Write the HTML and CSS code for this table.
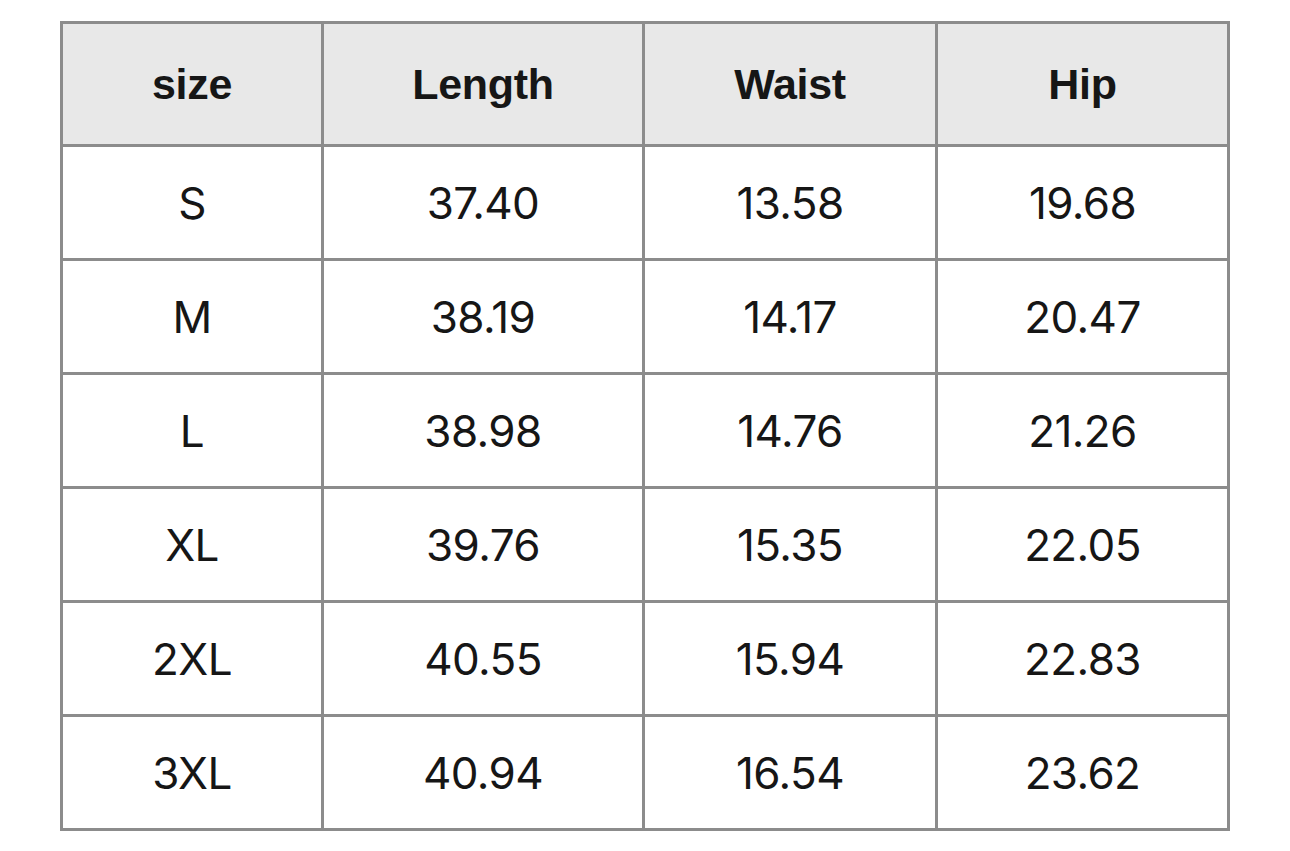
FILE: index.html
```html
<!DOCTYPE html>
<html>
<head>
<meta charset="utf-8">
<link rel="stylesheet" href="styles.css">
</head>
<body>
<div class="chart">
  <div class="cell head">size</div>
  <div class="cell head">Length</div>
  <div class="cell head">Waist</div>
  <div class="cell head">Hip</div>

  <div class="cell">S</div>
  <div class="cell">37.40</div>
  <div class="cell">13.58</div>
  <div class="cell">19.68</div>

  <div class="cell">M</div>
  <div class="cell">38.19</div>
  <div class="cell">14.17</div>
  <div class="cell">20.47</div>

  <div class="cell">L</div>
  <div class="cell">38.98</div>
  <div class="cell">14.76</div>
  <div class="cell">21.26</div>

  <div class="cell">XL</div>
  <div class="cell">39.76</div>
  <div class="cell">15.35</div>
  <div class="cell">22.05</div>

  <div class="cell">2XL</div>
  <div class="cell">40.55</div>
  <div class="cell">15.94</div>
  <div class="cell">22.83</div>

  <div class="cell">3XL</div>
  <div class="cell">40.94</div>
  <div class="cell">16.54</div>
  <div class="cell">23.62</div>
</div>
</body>
</html>
```
FILE: styles.css
```css
html, body {
  margin: 0;
  padding: 0;
  background: #ffffff;
}
body {
  padding: 21px 0 0 60px;
  font-family: Inter, "Liberation Sans", Arial, sans-serif;
  color: #161616;
}
.chart {
  display: inline-grid;
  grid-template-columns: 258px 318px 290px 289px;
  grid-template-rows: 120px repeat(6, 111px);
  gap: 3px;
  padding: 3px;
  background: #8c8c8c;
}
.cell {
  background: #ffffff;
  display: flex;
  align-items: center;
  justify-content: center;
  font-size: 44px;
  font-weight: 400;
  letter-spacing: -0.6px;
}
.cell.head {
  background: #e8e8e8;
  font-family: "Liberation Sans", Arial, sans-serif;
  font-size: 43px;
  font-weight: 700;
  letter-spacing: -0.3px;
}
```
